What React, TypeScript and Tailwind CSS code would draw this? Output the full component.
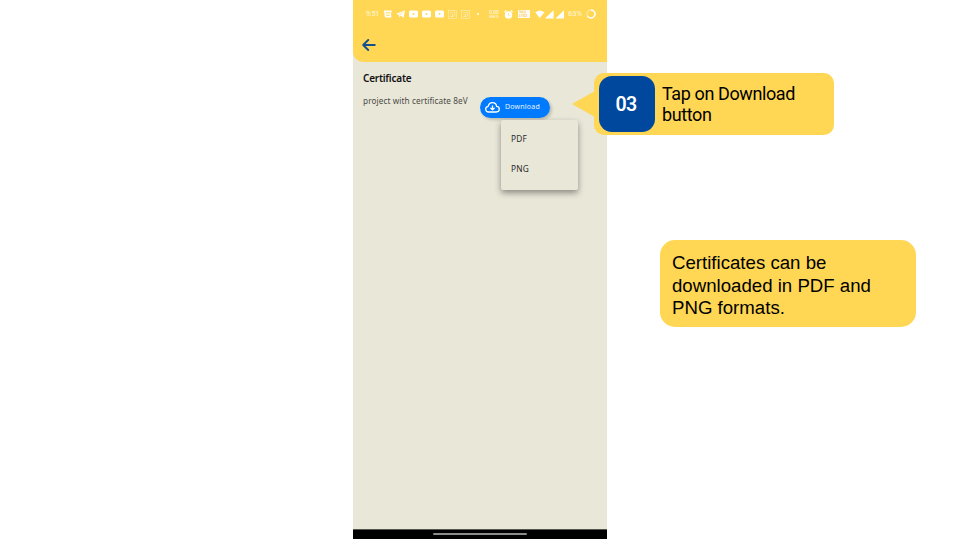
import React from "react";

function Chat() {
  return (
    <svg width="9" height="8" viewBox="0 0 9 8" fill="#fff">
      <path d="M0.9 0.5H8.7V2.6H7.9V5.2H8.3V7.5H2.5L1.5 6V3L0.9 2.4z" />
      <path d="M2.7 2.4h5M3.1 3.9h3.5M2.9 5.5h4" stroke="#ffd754" strokeWidth="0.7" />
    </svg>
  );
}

function Telegram() {
  return (
    <svg width="9" height="8" viewBox="0 0 9 8" fill="#fff">
      <path d="M9 0.2L7.6 7.7 4.4 5.6 3.2 7.2 2.8 4.8 0 4z" />
      <path d="M3 4.9L7.5 1.8 4.2 5.4" stroke="#ffd754" strokeWidth="0.4" fill="none" />
    </svg>
  );
}

function Play() {
  return (
    <svg width="9" height="8" viewBox="0 0 9 8">
      <rect x="0" y="0.4" width="9" height="7.2" rx="1.6" fill="#fff" />
      <path d="M3.7 2.7L6 4 3.7 5.3z" fill="#ffd754" />
    </svg>
  );
}

function AppTile() {
  return (
    <svg width="9" height="9" viewBox="0 0 9 9" fill="none" stroke="#fff" strokeOpacity="0.6" strokeWidth="0.6">
      <rect x="0.4" y="0.4" width="8.2" height="8.2" />
      <path d="M2.2 2.5h1.5M4.7 2.3h2v4M2.5 4.3h1M4.5 4v2.4M2.3 6.5h3" strokeWidth="0.8" />
    </svg>
  );
}

function Alarm() {
  return (
    <svg width="9" height="9" viewBox="0 0 9 9">
      <path d="M0.4 2L2.3 0.5M8.6 2L6.7 0.5" stroke="#fff" strokeWidth="1.2" />
      <circle cx="4.5" cy="4.9" r="3.7" fill="#fff" />
      <path d="M4.5 3v2.2l1.4 0.8" fill="none" stroke="#ffd754" strokeWidth="0.7" />
    </svg>
  );
}

function Volte() {
  return (
    <div className="ml-[5px] h-[8px] w-[12px] shrink-0 bg-white/90 text-[3.8px] leading-[4px] font-medium text-[#f3c64d]">
      <div className="h-[4px] pl-[1px]">Vo))</div>
      <div className="h-[4px] pl-[1px]">LTE2</div>
    </div>
  );
}

function Signals() {
  return (
    <svg width="31" height="9" viewBox="0 0 31 9" fill="#fff" className="ml-[5px] shrink-0">
      <path d="M0.2 2.2C2.8 0.1 6.8 0.1 9.4 2.2L4.8 8z" />
      <path d="M10.5 8.5V8L18.6 0.3V8.5z" />
      <path d="M21 8.5V8L29 0.3V8.5z" />
    </svg>
  );
}

function StatusBar() {
  return (
    <div className="flex h-[28px] items-center pl-[13px] text-white">
      <span className="w-[17px] shrink-0 text-[7.2px] whitespace-nowrap tracking-[-0.2px] text-white/80">9:51</span>
      <div className="flex shrink-0 items-center gap-[4px]">
        <Chat />
        <Telegram />
        <Play />
        <Play />
        <Play />
        <AppTile />
        <AppTile />
      </div>
      <span className="ml-[7px] size-[2px] shrink-0 rounded-full bg-white" />
      <div className="ml-[9px] flex w-[12px] shrink-0 flex-col items-center text-[4px] leading-[4px] whitespace-nowrap text-white/90">
        <div className="h-[4px] text-[5px]">0.00</div>
        <div className="mt-[1px] h-[4px]">KB/S</div>
      </div>
      <div className="ml-[4px] shrink-0"><Alarm /></div>
      <Volte />
      <Signals />
      <span className="ml-[2px] w-[16px] shrink-0 text-[7.6px] whitespace-nowrap text-white/80">63%</span>
      <svg width="10" height="10" viewBox="0 0 10 10" fill="none" className="ml-[2px] shrink-0">
        <circle cx="5" cy="5" r="4" stroke="#fff" strokeOpacity="0.5" strokeWidth="1.2" />
        <path d="M5 1A4 4 0 1 1 1.5 7" stroke="#fff" strokeWidth="1.4" />
      </svg>
    </div>
  );
}

function DownloadButton() {
  return (
    <button className="flex h-[21px] w-[70px] items-center rounded-full bg-[#007bff] pl-[5px] text-white shadow-[2px_2px_3px_rgba(0,0,0,0.18)]">
      <svg width="15" height="11" viewBox="0 0 15 11" fill="none" stroke="#fff" strokeWidth="1.3" strokeLinejoin="round" strokeLinecap="round">
        <path d="M3.7 10C1.9 10 0.7 8.8 0.7 7.1 0.7 5.6 1.8 4.5 3.2 4.3 3.7 2.1 5.3 0.7 7.5 0.7c2.2 0 3.8 1.5 4.1 3.6 1.6 0.1 2.7 1.2 2.7 2.8 0 1.7-1.2 2.9-2.9 2.9z" />
        <path d="M7.5 4v3.6M5.8 6.2L7.5 7.9l1.7-1.7" />
      </svg>
      <span className="mb-[2px] ml-[5px] font-['Noto_Sans',sans-serif] text-[7px] leading-[10px] tracking-[0.2px] text-white/90">Download</span>
    </button>
  );
}

function Phone() {
  return (
    <section className="flex h-[538.5px] w-[254px] flex-col bg-[#e9e7d8] font-['Noto_Sans',sans-serif]">
      <header className="h-[62px] rounded-bl-[10px] bg-[#ffd754] font-[Roboto,sans-serif]">
        <StatusBar />
        <svg width="14" height="12" viewBox="0 0 14 12" fill="none" stroke="#12518f" strokeWidth="1.9" strokeLinecap="round" strokeLinejoin="round" className="mt-[11px] ml-[9px]">
          <path d="M12.8 6H1.3M6.2 1L1.2 6l5 5" />
        </svg>
      </header>
      <main className="flex-1 px-[10px] pt-[8px]">
        <h1 className="text-[10px] leading-[17px] font-semibold tracking-[-0.22px] text-[#111]">Certificate</h1>
        <div className="flex items-start pt-[10px]">
          <p className="-mt-[1px] w-[117px] text-[8.2px] leading-[10px] tracking-[0.1px] whitespace-nowrap text-[#4b4b47]">project with certificate 8eV</p>
          <div className="relative">
            <DownloadButton />
            <ul className="absolute top-[23px] left-[21px] flex h-[70px] w-[77px] flex-col rounded-[2px] bg-[#e9e7d8] pt-[4px] pl-[10px] text-[8.3px] tracking-[0.15px] text-[#2b2b29] shadow-[0_3px_6px_rgba(0,0,0,0.4)]">
              <li className="flex h-[30px] items-center">PDF</li>
              <li className="flex h-[30px] items-center">PNG</li>
            </ul>
          </div>
        </div>
      </main>
      <footer className="flex h-[10px] items-center justify-center border-t border-[#55554f] bg-black">
        <span className="h-[2px] w-[94px] rounded-full bg-[#8c8c8c]" />
      </footer>
    </section>
  );
}

export default function App() {
  return (
    <div className="relative flex h-[540px] w-[960px] overflow-hidden bg-white pl-[353px]">
      <Phone />
      <aside className="pt-[240px] pl-[53px]">
        <p className="h-[87px] w-[256px] rounded-[15px] bg-[#ffd754] pt-[12px] pl-[12px] font-['Liberation_Sans',Arial,sans-serif] text-[18.65px] leading-[22.5px] text-black">
          Certificates can be<br />downloaded in PDF and<br />PNG formats.
        </p>
      </aside>
      <div className="absolute top-[73px] left-[572px] flex items-center font-[Roboto,sans-serif]">
        <svg width="22" height="26" viewBox="0 0 22 26" className="h-[26px] w-[22px]">
          <path d="M0 13L22 0.5V25.5z" fill="#ffd754" />
        </svg>
        <div className="flex h-[62px] w-[240px] items-center rounded-[10px] bg-[#ffd754] pl-[5px]">
          <div className="flex h-[56px] w-[56px] items-center justify-center rounded-[13px] bg-[#00479e] pt-[1px] pr-[2px] text-[19.6px] font-semibold tracking-[-0.6px] text-white">03</div>
          <p className="ml-[7px] text-[18px] leading-[21px] tracking-[-0.4px] text-black">Tap on Download<br />button</p>
        </div>
      </div>
    </div>
  );
}
